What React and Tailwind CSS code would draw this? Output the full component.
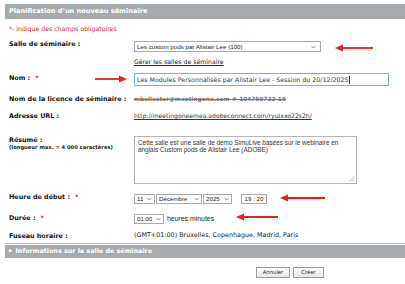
import React from 'react';

const Chevron = () => (
    <svg width="5" height="4" viewBox="0 0 5 4" className="shrink-0">
        <path d="M0.5 1 L2.5 3 L4.5 1" fill="none" stroke="#555" strokeWidth="0.7" />
    </svg>
);

function Select({ value, className }) {
    return (
        <div className={`h-full flex items-center justify-between border border-[#a9a9a9] bg-white px-[2px] font-['Liberation_Sans',sans-serif] text-[6.2px] text-[#222] ${className}`}>
            <span className="truncate">{value}</span>
            <Chevron />
        </div>
    );
}

function Arrow({ left, top, width, dir }) {
    // red annotation arrow laid over the form
    return (
        <svg
            className="absolute"
            style={{ left, top }}
            width={width}
            height="8"
            viewBox={`0 0 ${width} 8`}
        >
            {dir === 'left' ? (
                <>
                    <line x1="6" y1="4" x2={width} y2="4" stroke="#e3221c" strokeWidth="1.8" />
                    <polygon points="0,4 8,0.5 8,7.5" fill="#e3221c" />
                </>
            ) : (
                <>
                    <line x1="0" y1="4" x2={width - 6} y2="4" stroke="#e3221c" strokeWidth="1.8" />
                    <polygon points={`${width},4 ${width - 8},0.5 ${width - 8},7.5`} fill="#e3221c" />
                </>
            )}
        </svg>
    );
}

const Label = ({ children, req, className = '' }) => (
    <div className={`w-[125px] shrink-0 font-bold text-[6.4px] leading-[8px] text-[#111] ${className}`}>
        {children}
        {req && <span className="text-[#e03030] ml-[5px]">*</span>}
    </div>
);

export default function App() {
    return (
        <div className="relative w-[405px] h-[284px] bg-white overflow-hidden font-['DejaVu_Sans',sans-serif]">
            <div className="mt-[4px] ml-[5px] h-[15px] bg-[#a8abae] flex items-center pl-[4px] text-white font-bold text-[6.6px]">
                Planification d’un nouveau séminaire
            </div>

            <div className="pl-[9px]">
                <div className="mt-[6px] h-[8px] leading-[8px] text-[6.2px] text-[#d42a24]">
                    *- indique des champs obligatoires
                </div>

                <div className="mt-[7px] flex">
                    <Label>Salle de séminaire :</Label>
                    <div className="mt-[1px] h-[11px]">
                        <Select value="Les custom pods par Alistair Lee (100)" className="w-[187px] pr-[4px]" />
                    </div>
                </div>

                <div className="mt-[6px] h-[8px] leading-[8px] pl-[125px] text-[6.2px] text-[#222]">
                    <span className="underline">Gérer les salles de séminaire</span>
                </div>

                <div className="mt-[7px] flex">
                    <Label className="mt-[1px]" req>Nom :</Label>
                    <div className="h-[13px] w-[255px] border border-[#7fb3c9] bg-white flex items-center px-[2px] text-[6.3px] text-[#333] whitespace-nowrap">
                        Les Modules Personnalisés par Alistair Lee - Session du 20/12/2025
                        <span className="inline-block w-px h-[8px] bg-[#333]" />
                    </div>
                </div>

                <div className="mt-[9px] flex h-[8px] items-center">
                    <Label>Nom de la licence de séminaire :</Label>
                    <span className="text-[5.8px] text-[#777] line-through font-bold">mbellester@meetingone.com-#-104750722-16</span>
                </div>

                <div className="mt-[9px] flex h-[8px] items-center">
                    <Label>Adresse URL :</Label>
                    <span className="text-[6.1px] text-[#333] underline">http://meetingoneemea.adobeconnect.com/ryulxxo22s2h/</span>
                </div>

                <div className="mt-[16px] flex">
                    <div className="w-[125px] shrink-0 mt-[1px]">
                        <div className="font-bold text-[6.4px] leading-[7px] text-[#111]">Résumé :</div>
                        <div className="font-bold text-[5.2px] leading-[6px] text-[#111]">(longueur max. = 4 000 caractères)</div>
                    </div>
                    <div className="relative h-[48px] w-[223px] border border-[#b5b5b5] bg-white px-[3px] pt-[2px] font-['Liberation_Sans',sans-serif] text-[6.4px] leading-[7px] text-[#333] whitespace-nowrap">
                        Cette salle est une salle de démo SimuLive basées sur le webinaire en
                        <br />
                        anglais Custom pods de Alistair Lee (ADOBE)
                        <svg className="absolute right-[1px] bottom-[1px]" width="7" height="7" viewBox="0 0 7 7">
                            <path d="M6.5 1 L1 6.5 M6.5 3 L3 6.5 M6.5 5 L5 6.5" stroke="#999" strokeWidth="0.6" />
                        </svg>
                    </div>
                </div>

                <div className="mt-[9px] flex">
                    <Label req>Heure de début :</Label>
                    <div className="mt-[1px] h-[10px] flex">
                        <Select value="11" className="w-[21px]" />
                        <Select value="Décembre" className="ml-[1px] w-[46px]" />
                        <Select value="2025" className="ml-[1px] w-[29px]" />
                        <div className="ml-[9px] w-[26px] h-full border border-[#a9a9a9] flex items-center justify-center font-['Liberation_Sans',sans-serif] text-[6.2px] text-[#222]">
                            19 : 20
                        </div>
                    </div>
                </div>

                <div className="mt-[10px] flex">
                    <Label req>Durée :</Label>
                    <div className="h-[10px] flex items-center">
                        <Select value="01:00" className="w-[30px]" />
                        <span className="ml-[3px] font-['Liberation_Sans',sans-serif] text-[6.9px] text-[#222]">heures:minutes</span>
                    </div>
                </div>

                <div className="mt-[8px] flex h-[8px] items-center">
                    <Label>Fuseau horaire :</Label>
                    <span className="text-[6.4px] text-[#222]">(GMT+01:00) Bruxelles, Copenhague, Madrid, Paris</span>
                </div>
            </div>

            <div className="ml-[5px] mt-[3px] h-px bg-[#b8b8b8]" />
            <div className="ml-[5px] mt-[1px] h-[13px] bg-[#a8abae] flex items-center pl-[4px] text-white font-bold text-[6.4px]">
                <span className="text-[4.5px] mr-[3px]">▶</span>
                Informations sur la salle de séminaire
            </div>

            <div className="mt-[9px] flex pl-[256px] gap-[3px]">
                <button className="w-[34px] h-[11px] border border-[#9a9a9a] bg-gradient-to-b from-white to-[#e6e6e6] text-[5.3px] text-[#222] leading-none">
                    Annuler
                </button>
                <button className="w-[31px] h-[11px] border border-[#9a9a9a] bg-gradient-to-b from-white to-[#e6e6e6] text-[5.3px] text-[#222] leading-none">
                    Créer
                </button>
            </div>

            <Arrow left={335} top={44} width={38} dir="left" />
            <Arrow left={95} top={75} width={32} dir="right" />
            <Arrow left={280} top={194} width={45} dir="left" />
            <Arrow left={236} top={213} width={42} dir="left" />
        </div>
    );
}
